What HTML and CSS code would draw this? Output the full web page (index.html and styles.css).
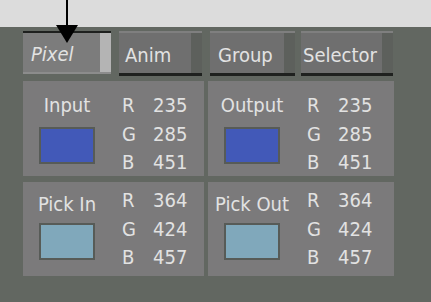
FILE: index.html
```html
<!DOCTYPE html>
<html>
<head>
<meta charset="utf-8">
<link rel="stylesheet" href="styles.css">
</head>
<body>
<div class="screen">
  <div class="topbar"></div>
  <div class="main">
    <div class="tabs">
      <div class="tab tab-active tab-pixel"><span class="tab-label">Pixel</span><span class="tab-stripe"></span></div>
      <div class="tab tab-anim"><span class="tab-label">Anim</span><span class="tab-stripe"></span></div>
      <div class="tab tab-group"><span class="tab-label">Group</span><span class="tab-stripe"></span></div>
      <div class="tab tab-selector"><span class="tab-label">Selector</span><span class="tab-stripe"></span></div>
    </div>
    <div class="panels">
      <div class="panel panel-top">
        <div class="swatch-col">
          <div class="label">Input</div>
          <div class="swatch swatch-blue"></div>
        </div>
        <div class="rgb">
          <span class="ch">R</span><span class="val">235</span>
          <span class="ch">G</span><span class="val">285</span>
          <span class="ch">B</span><span class="val">451</span>
        </div>
      </div>
      <div class="panel panel-top">
        <div class="swatch-col">
          <div class="label">Output</div>
          <div class="swatch swatch-blue"></div>
        </div>
        <div class="rgb">
          <span class="ch">R</span><span class="val">235</span>
          <span class="ch">G</span><span class="val">285</span>
          <span class="ch">B</span><span class="val">451</span>
        </div>
      </div>
      <div class="panel panel-bottom">
        <div class="swatch-col">
          <div class="label">Pick In</div>
          <div class="swatch swatch-light"></div>
        </div>
        <div class="rgb">
          <span class="ch">R</span><span class="val">364</span>
          <span class="ch">G</span><span class="val">424</span>
          <span class="ch">B</span><span class="val">457</span>
        </div>
      </div>
      <div class="panel panel-bottom">
        <div class="swatch-col">
          <div class="label">Pick Out</div>
          <div class="swatch swatch-light"></div>
        </div>
        <div class="rgb">
          <span class="ch">R</span><span class="val">364</span>
          <span class="ch">G</span><span class="val">424</span>
          <span class="ch">B</span><span class="val">457</span>
        </div>
      </div>
    </div>
  </div>
  <svg class="pointer" width="431" height="50" viewBox="0 0 431 50">
    <rect x="66" y="0" width="2" height="28" fill="#000"/>
    <polygon points="56,25 78,25 67,43" fill="#000"/>
  </svg>
</div>
</body>
</html>
```
FILE: styles.css
```css
html, body {
  margin: 0;
  padding: 0;
}
body {
  width: 431px;
  height: 302px;
  overflow: hidden;
  background: #626761;
  font-family: "DejaVu Sans Condensed", "DejaVu Sans", sans-serif;
  font-stretch: condensed;
  color: #e2e2e2;
}
.screen {
  position: relative;
  width: 431px;
  height: 302px;
}
.topbar {
  height: 27px;
  background: #dcdcdc;
}
.main {
  padding: 4px 0 0 23px;
}
.tabs {
  display: flex;
  align-items: flex-start;
  height: 45px;
}
.tab {
  display: flex;
  box-sizing: border-box;
  height: 45px;
  background: #6f6f6f;
  border-top: 2px solid #7f7f7f;
  border-bottom: 3px solid #1f211f;
  margin-right: 8px;
}
.tab-label {
  flex: 1;
  font-size: 20px;
  line-height: 40px;
  padding-top: 2px;
  padding-left: 6px;
  white-space: nowrap;
  overflow: visible;
  position: relative;
  z-index: 1;
}
.tab-stripe {
  width: 11px;
  background: #5d605c;
}
.tab-active {
  height: 43px;
  background: #7c7c7c;
  border-top: 2px solid #1e201e;
  border-bottom: 2px solid #8c8c8c;
}
.tab-active .tab-label {
  font-style: italic;
  line-height: 38px;
  padding-left: 8px;
}
.tab-active .tab-stripe {
  background: #b4b4b4;
}
.tab-pixel { width: 88px; }
.tab-anim { width: 83px; }
.tab-group { width: 85px; margin-right: 6px; }
.tab-group .tab-label { padding-left: 8px; }
.tab-selector { width: 92px; }
.tab-selector .tab-label { padding-left: 2px; }

.panels {
  display: grid;
  grid-template-columns: 181px 186px;
  grid-template-rows: 95px 94px;
  column-gap: 4px;
  row-gap: 6px;
  margin-top: 5px;
}
.panel {
  display: flex;
  background: #7b7a7b;
  box-sizing: border-box;
}
.panel-top { padding-top: 10px; }
.panel-bottom { padding-top: 4px; }
.swatch-col {
  width: 88px;
  display: flex;
  flex-direction: column;
  align-items: center;
}
.label {
  font-size: 20px;
  line-height: 28.5px;
  white-space: nowrap;
}
.panel-bottom .label {
  margin-top: 4px;
}
.swatch {
  width: 56px;
  height: 37px;
  box-sizing: border-box;
  border: 2px solid #575b57;
  margin-top: 7px;
}
.panel-bottom .swatch { margin-top: 4px; }
.swatch-blue { background: #4259b8; }
.swatch-light { background: #80a8bb; }
.rgb {
  margin-left: 11px;
  display: grid;
  grid-template-columns: 31px auto;
  grid-auto-rows: 28.5px;
  font-size: 20px;
  line-height: 28.5px;
  align-content: start;
}
.pointer {
  position: absolute;
  left: 0;
  top: 0;
}
```
